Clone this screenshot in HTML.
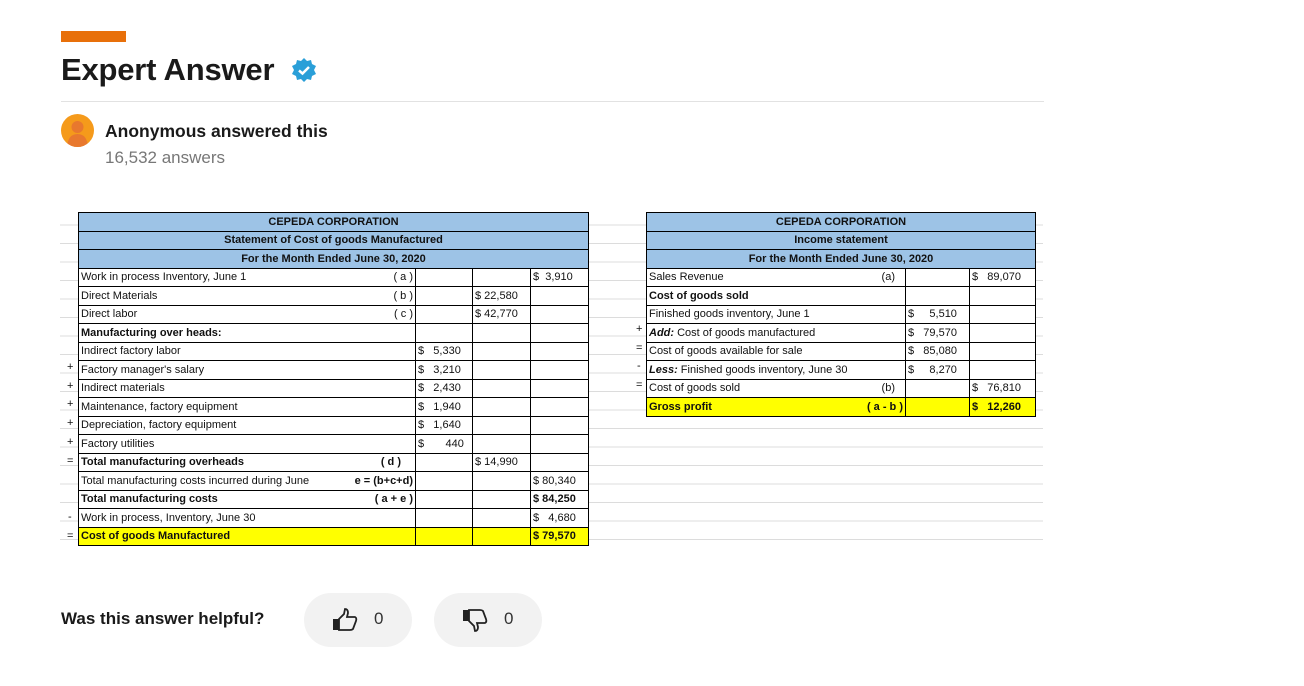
<!DOCTYPE html>
<html><head><meta charset="utf-8"><style>
*{margin:0;padding:0;box-sizing:border-box}
body{width:1304px;height:686px;background:#fff;position:relative;overflow:hidden;font-family:"Liberation Sans",sans-serif;color:#222}
.bar{position:absolute;left:61px;top:31px;width:65px;height:11px;background:#e8700a}
h1{position:absolute;left:61px;top:52px;font-size:31px;font-weight:bold;color:#1a1a1a;letter-spacing:-0.2px}
.hr{position:absolute;left:61px;top:101px;width:983px;height:1px;background:#e2e2e2}
.av{position:absolute;left:61px;top:114px;width:33px;height:33px;border-radius:50%;background:#f59a1b;overflow:hidden}
.name{position:absolute;left:105px;top:121px;font-size:17.5px;font-weight:bold;color:#1a1a1a}
.cnt{position:absolute;left:105px;top:148px;font-size:17px;color:#777}
.grid{position:absolute;left:60px;top:207px;width:983px;height:342px;
background-image:repeating-linear-gradient(to bottom,transparent 0,transparent 17.5px,#dcdcdc 17.5px,#dcdcdc 18.5px)}
table{position:absolute;border-collapse:collapse;table-layout:fixed;font-family:"Liberation Sans",sans-serif;font-size:11px;color:#111;background:#fff}
td{border:1px solid #000;height:18.5px;padding:0 2px;white-space:nowrap;overflow:hidden;line-height:16px}
td.h{background:#9dc3e6;text-align:center;font-weight:bold}
.y{background:#ffff00}
b{font-weight:bold}
.op{position:absolute;font-size:11px;color:#111;font-family:"Liberation Sans",sans-serif}
.q{position:absolute;left:61px;top:609px;font-size:17px;font-weight:bold;color:#1a1a1a}
.btn{position:absolute;top:593px;width:108px;height:54px;border-radius:27px;background:#f2f2f2}
.btn span{position:absolute;left:70px;top:16px;font-size:17px;color:#333}
.btn svg{position:absolute;left:27px;top:15px}
</style></head><body>
<div class="bar"></div>
<h1>Expert Answer</h1>
<svg style="position:absolute;left:291px;top:57px" width="26" height="26" viewBox="0 0 26 26"><polygon points="13,1 16,4 20,3 21,7 25,9 23,13 25,17 21,19 20,23 16,22 13,25 10,22 6,23 5,19 1,17 3,13 1,9 5,7 6,3 10,4" fill="#2a9fd8"/><path d="M8 13.5l3.5 3 6.5-6.5" stroke="#fff" stroke-width="2.5" fill="none"/></svg>
<div class="hr"></div>
<div class="av"><svg width="33" height="33"><circle cx="16.5" cy="13" r="6" fill="#e8782e"/><path d="M6 33 Q7 20 16.5 20 Q26 20 27 33Z" fill="#e8782e"/></svg></div>
<div class="name">Anonymous answered this</div>
<div class="cnt">16,532 answers</div>
<div class="grid"></div>

<table style="left:78px;top:212px;width:510px">
<colgroup><col style="width:337px"><col style="width:57px"><col style="width:58px"><col style="width:58px"></colgroup>
<tr><td class="h" colspan="4">CEPEDA CORPORATION</td></tr>
<tr><td class="h" colspan="4">Statement of Cost of goods Manufactured</td></tr>
<tr><td class="h" colspan="4">For the Month Ended June 30, 2020</td></tr>
<tr><td>Work in process Inventory, June 1<span style="float:right">( a )</span></td><td></td><td></td><td>$&nbsp;&nbsp;3,910</td></tr>
<tr><td>Direct Materials<span style="float:right">( b )</span></td><td></td><td>$ 22,580</td><td></td></tr>
<tr><td>Direct labor<span style="float:right">( c )</span></td><td></td><td>$ 42,770</td><td></td></tr>
<tr><td><b>Manufacturing over heads:</b></td><td></td><td></td><td></td></tr>
<tr><td>Indirect factory labor</td><td>$&nbsp;&nbsp;&nbsp;5,330</td><td></td><td></td></tr>
<tr><td>Factory manager's salary</td><td>$&nbsp;&nbsp;&nbsp;3,210</td><td></td><td></td></tr>
<tr><td>Indirect materials</td><td>$&nbsp;&nbsp;&nbsp;2,430</td><td></td><td></td></tr>
<tr><td>Maintenance, factory equipment</td><td>$&nbsp;&nbsp;&nbsp;1,940</td><td></td><td></td></tr>
<tr><td>Depreciation, factory equipment</td><td>$&nbsp;&nbsp;&nbsp;1,640</td><td></td><td></td></tr>
<tr><td>Factory utilities</td><td>$&nbsp;&nbsp;&nbsp;&nbsp;&nbsp;&nbsp;&nbsp;440</td><td></td><td></td></tr>
<tr><td><b>Total manufacturing overheads</b><span style="float:right;margin-right:12px"><b>( d )</b></span></td><td></td><td>$ 14,990</td><td></td></tr>
<tr><td>Total manufacturing costs incurred during June<span style="float:right"><b>e = (b+c+d)</b></span></td><td></td><td></td><td>$ 80,340</td></tr>
<tr><td><b>Total manufacturing costs</b><span style="float:right"><b>( a + e )</b></span></td><td></td><td></td><td><b>$ 84,250</b></td></tr>
<tr><td>Work in process, Inventory, June 30</td><td></td><td></td><td>$&nbsp;&nbsp;&nbsp;4,680</td></tr>
<tr class="y"><td><b>Cost of goods Manufactured</b></td><td></td><td></td><td><b>$ 79,570</b></td></tr>
</table>
<div class="op" style="left:67px;top:361px">+</div>
<div class="op" style="left:67px;top:380px">+</div>
<div class="op" style="left:67px;top:398px">+</div>
<div class="op" style="left:67px;top:417px">+</div>
<div class="op" style="left:67px;top:436px">+</div>
<div class="op" style="left:67px;top:455px">=</div>
<div class="op" style="left:68px;top:511px">-</div>
<div class="op" style="left:67px;top:530px">=</div>

<table style="left:646px;top:212px;width:389px">
<colgroup><col style="width:259px"><col style="width:64px"><col style="width:66px"></colgroup>
<tr><td class="h" colspan="3">CEPEDA CORPORATION</td></tr>
<tr><td class="h" colspan="3">Income statement</td></tr>
<tr><td class="h" colspan="3">For the Month Ended June 30, 2020</td></tr>
<tr><td>Sales Revenue<span style="float:right;margin-right:8px">(a)</span></td><td></td><td>$&nbsp;&nbsp;&nbsp;89,070</td></tr>
<tr><td><b>Cost of goods sold</b></td><td></td><td></td></tr>
<tr><td>Finished goods inventory, June 1</td><td>$&nbsp;&nbsp;&nbsp;&nbsp;&nbsp;5,510</td><td></td></tr>
<tr><td><b><i>Add:</i></b> Cost of goods manufactured</td><td>$&nbsp;&nbsp;&nbsp;79,570</td><td></td></tr>
<tr><td>Cost of goods available for sale</td><td>$&nbsp;&nbsp;&nbsp;85,080</td><td></td></tr>
<tr><td><b><i>Less:</i></b> Finished goods inventory, June 30</td><td>$&nbsp;&nbsp;&nbsp;&nbsp;&nbsp;8,270</td><td></td></tr>
<tr><td>Cost of goods sold<span style="float:right;margin-right:8px">(b)</span></td><td></td><td>$&nbsp;&nbsp;&nbsp;76,810</td></tr>
<tr class="y"><td><b>Gross profit</b><span style="float:right"><b>( a - b )</b></span></td><td></td><td><b>$&nbsp;&nbsp;&nbsp;12,260</b></td></tr>
</table>
<div class="op" style="left:636px;top:323px">+</div>
<div class="op" style="left:636px;top:342px">=</div>
<div class="op" style="left:637px;top:360px">-</div>
<div class="op" style="left:636px;top:379px">=</div>

<div class="q">Was this answer helpful?</div>
<div class="btn" style="left:304px"><svg width="28" height="24" viewBox="0 0 28 24"><rect x="2" y="11" width="6" height="11" fill="#222"/><path d="M8 11 L13 6 L14 1 Q17 1 17 5 L16 9 L24 9 Q26 10 25 13 L22 21 Q21 22 19 22 L8 22Z" fill="none" stroke="#222" stroke-width="1.8"/></svg><span>0</span></div>
<div class="btn" style="left:434px"><svg width="28" height="24" viewBox="0 0 28 24"><rect x="2" y="2" width="6" height="11" fill="#222"/><path d="M8 13 L13 18 L14 23 Q17 23 17 19 L16 15 L24 15 Q26 14 25 11 L22 3 Q21 2 19 2 L8 2Z" fill="none" stroke="#222" stroke-width="1.8"/></svg><span>0</span></div>
</body></html>
